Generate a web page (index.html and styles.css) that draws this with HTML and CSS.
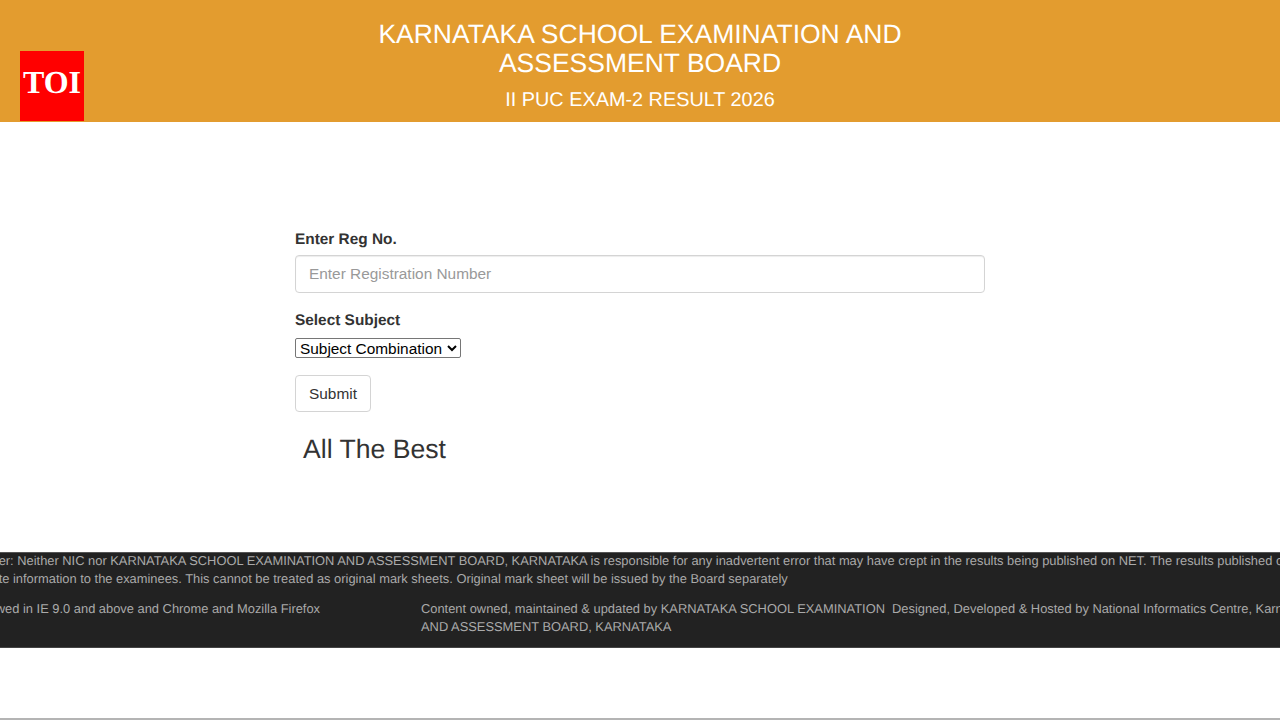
FILE: index.html
```html
<!DOCTYPE html>
<html lang="en">
<head>
<meta charset="utf-8">
<title>II PUC EXAM-2 RESULT 2026</title>
<link rel="stylesheet" href="styles.css">
</head>
<body>
<div class="page">
  <header class="header">
    <div class="logo">TOI</div>
    <div class="heading">
      <h1 class="title">KARNATAKA SCHOOL EXAMINATION AND<br>ASSESSMENT BOARD</h1>
      <h2 class="subtitle">II PUC EXAM-2 RESULT 2026</h2>
    </div>
  </header>
  <main class="main">
    <form class="form">
      <label class="label" for="reg">Enter Reg No.</label>
      <input class="input" id="reg" type="text" placeholder="Enter Registration Number">
      <label class="label label-subject" for="subject">Select Subject</label>
      <select class="select" id="subject"><option>Subject Combination</option></select>
      <button class="submit" type="button">Submit</button>
      <p class="best">All The Best</p>
    </form>
  </main>
  <footer class="footer">
    <div class="footer-inner">
      <p class="disclaimer">Disclaimer: Neither NIC nor KARNATAKA SCHOOL EXAMINATION AND ASSESSMENT BOARD, KARNATAKA is responsible for any inadvertent error that may have crept in the results being published on NET. The results published on net are for immediate information to the examinees. This cannot be treated as original mark sheets. Original mark sheet will be issued by the Board separately</p>
      <div class="cols">
        <p class="col">Best viewed in IE 9.0 and above and Chrome and Mozilla Firefox</p>
        <p class="col">Content owned, maintained &amp; updated by KARNATAKA SCHOOL EXAMINATION AND ASSESSMENT BOARD, KARNATAKA</p>
        <p class="col">Designed, Developed &amp; Hosted by National Informatics Centre, Karnataka</p>
      </div>
    </div>
  </footer>
</div>
</body>
</html>
```
FILE: styles.css
```css
* { box-sizing: border-box; }
html, body { margin: 0; padding: 0; }
body {
  font-family: "Liberation Sans", Arial, sans-serif;
  font-size: 14px;
  color: #333;
  background: #fff;
  overflow: hidden;
  text-rendering: geometricPrecision;
}
.page {
  height: 720px;
  display: flex;
  flex-direction: column;
  border-bottom: 2px solid #b4b4b4;
}
.header {
  position: relative;
  height: 122px;
  flex: none;
  background: #e39c2f;
  color: #fff;
  text-align: center;
  padding-top: 20px;
}
.logo {
  position: absolute;
  left: 20px;
  top: 51px;
  width: 64px;
  height: 70px;
  background: #f00;
  color: #fff;
  font-family: "Liberation Serif", "Times New Roman", serif;
  font-weight: 700;
  font-size: 32px;
  line-height: 63px;
  text-align: center;
}
.title {
  margin: 0;
  font-size: 26.5px;
  font-weight: 400;
  line-height: 29px;
}
.subtitle {
  margin: 11px 0 0;
  font-size: 19.85px;
  font-weight: 400;
  line-height: 22px;
}
.main {
  flex: none;
  height: 430px;
  display: flex;
  justify-content: center;
  padding-top: 108px;
}
.form {
  width: 690px;
  display: flex;
  flex-direction: column;
  align-items: flex-start;
}
.label {
  font-size: 15.4px;
  font-weight: 700;
  line-height: 20px;
  margin-bottom: 5px;
}
.input {
  width: 100%;
  height: 38px;
  padding: 5px 13px;
  border: 1px solid #d4d4d4;
  border-radius: 4px;
  font: 15.4px "Liberation Sans", Arial, sans-serif;
  color: #555;
  background: #fff;
  box-shadow: inset 0 1px 1px rgba(0,0,0,.075);
}
.input::placeholder { color: #999; opacity: 1; }
.label-subject { margin-top: 18px; margin-bottom: 7px; }
.select {
  width: 166px;
  height: 20px;
  font: 15.4px "Liberation Sans", Arial, sans-serif;
  color: #000;
  background: #fff;
  border: 1px solid #767676;
  border-radius: 2px;
  padding: 0;
}
.submit {
  margin-top: 17px;
  width: 76px;
  height: 37px;
  padding: 0;
  font: 15.4px "Liberation Sans", Arial, sans-serif;
  color: #333;
  background: #fff;
  border: 1px solid #d4d4d4;
  border-radius: 4px;
}
.best {
  margin: 21px 0 0 8px;
  font-size: 26.6px;
  line-height: 32px;
  color: #333;
}
.footer {
  flex: none;
  height: 96px;
  background: #222;
  border-top: 1px solid #555;
  border-bottom: 1px solid #444;
  color: #aaa;
  overflow: hidden;
}
.footer-inner {
  width: 1500px;
  margin-left: -50px;
}
.disclaimer {
  margin: -1px 0 0;
  font-size: 12.88px;
  line-height: 18px;
  width: 1420px;
}
.cols {
  display: grid;
  grid-template-columns: 471px 471px 471px;
  margin-top: 12px;
}
.col {
  margin: 0;
  font-size: 12.88px;
  line-height: 18px;
}
```
